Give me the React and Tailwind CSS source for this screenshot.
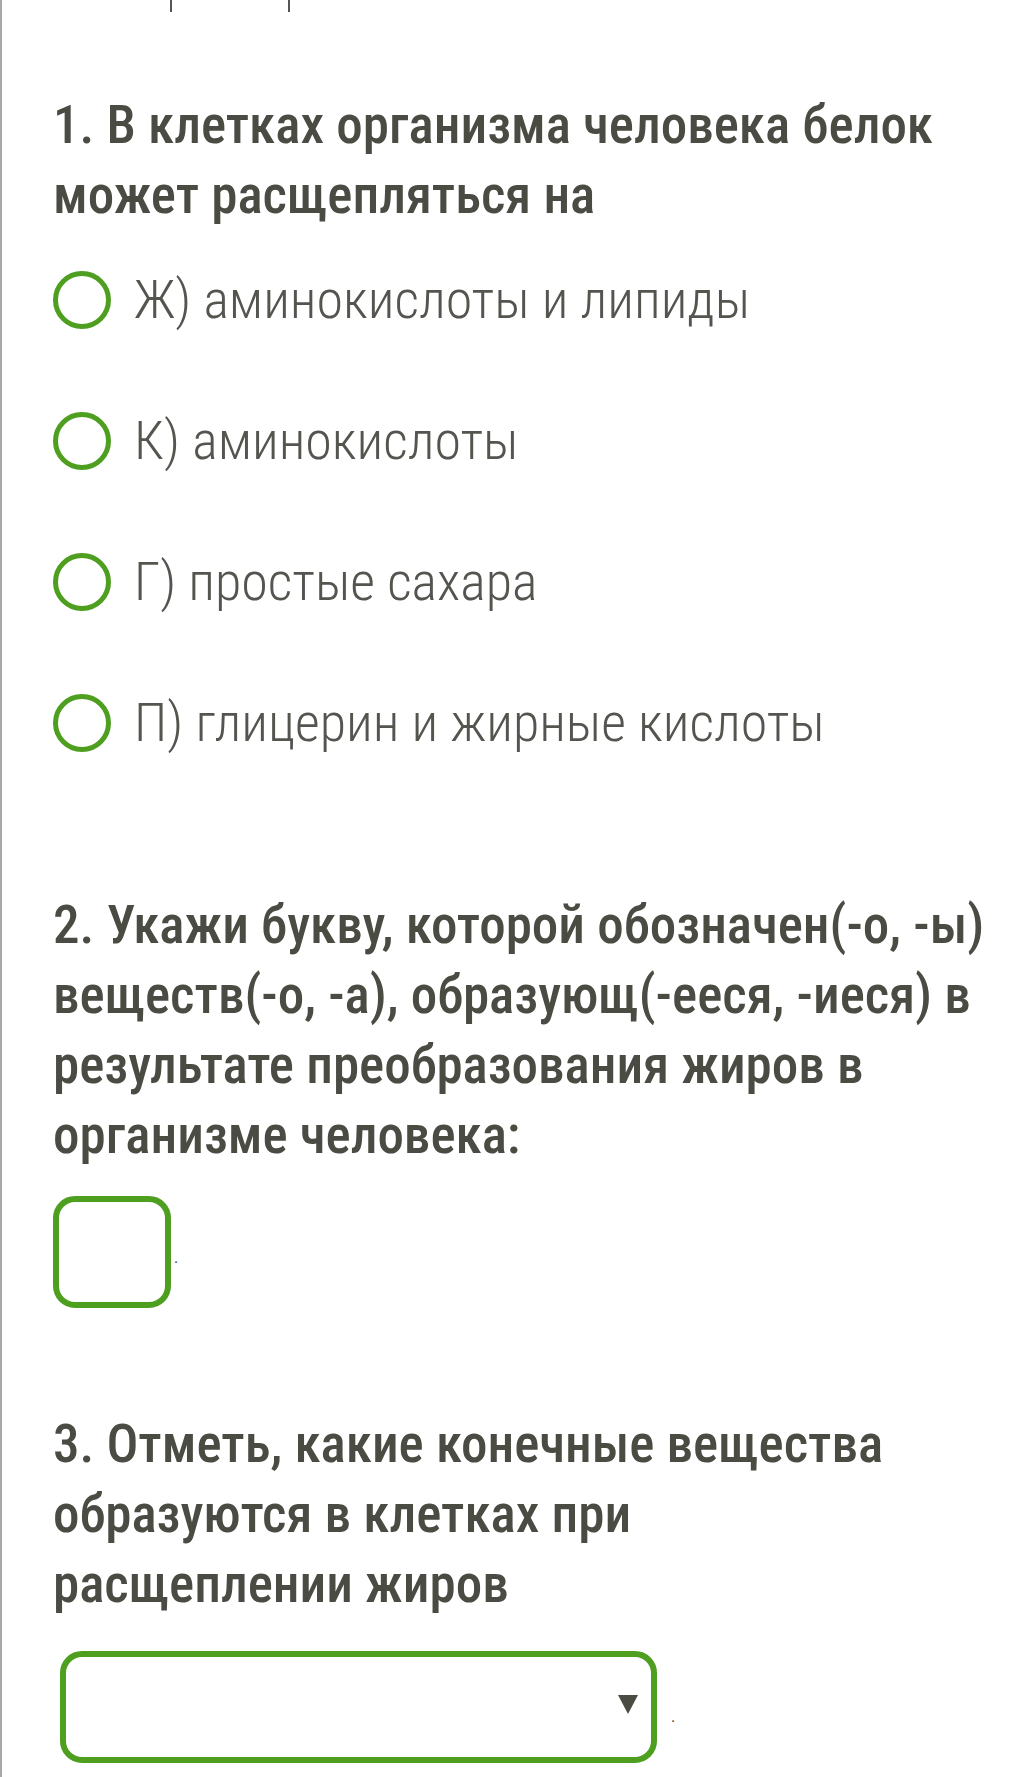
import React from "react";

const font = { fontFamily: "'Roboto Condensed', Roboto, 'Noto Sans', 'Liberation Sans', sans-serif" };

function Option({ label }) {
  return (
    <div className="flex items-center h-[60px]">
      <div className="w-[58px] h-[58px] rounded-full border-[5px] border-[#4e9f20] shrink-0" />
      <span className="ml-[23px] text-[54px] leading-[60px] font-light text-[#555550] whitespace-nowrap">
        {label}
      </span>
    </div>
  );
}

export default function App() {
  return (
    <div style={font} className="w-[1020px] min-h-[1777px] bg-white border-l-2 border-[#a8a8a8] overflow-hidden">
      <div className="flex h-[9px] relative">
        <div className="absolute left-[168px] top-0 w-[2px] h-[12px] bg-[#555]" />
        <div className="absolute left-[286px] top-0 w-[2px] h-[12px] bg-[#555]" />
      </div>
      <div className="pl-[51px] pr-[20px]">
        <div className="mt-[81px] text-[53px] leading-[70px] font-medium text-[#4a4b43]">
          <div className="whitespace-nowrap">1. В клетках организма человека белок</div>
          <div className="whitespace-nowrap">может расщепляться на</div>
        </div>
        <div className="mt-[40px] flex flex-col gap-[81px]">
          <Option label="Ж) аминокислоты и липиды" />
          <Option label="К) аминокислоты" />
          <Option label="Г) простые сахара" />
          <Option label="П) глицерин и жирные кислоты" />
        </div>
        <div className="mt-[137px] text-[53px] leading-[70px] font-medium text-[#4a4b43]">
          <div className="whitespace-nowrap">2. Укажи букву, которой обозначен(-о, -ы)</div>
          <div className="whitespace-nowrap">веществ(-о, -а), образующ(-еeся, -иеся) в</div>
          <div className="whitespace-nowrap">результате преобразования жиров в</div>
          <div className="whitespace-nowrap">организме человека:</div>
        </div>
        <div className="mt-[26px] flex items-end">
          <div className="w-[118px] h-[112px] rounded-[22px] border-[6px] border-[#4e9f20] shrink-0" />
          <span className="ml-[3px] mb-[42px] text-[16px] leading-none text-[#444]">.</span>
        </div>
        <div className="mt-[101px] text-[53px] leading-[70px] font-medium text-[#4a4b43]">
          <div className="whitespace-nowrap">3. Отметь, какие конечные вещества</div>
          <div className="whitespace-nowrap">образуются в клетках при</div>
          <div className="whitespace-nowrap">расщеплении жиров</div>
        </div>
        <div className="mt-[32px] ml-[7px] flex items-end">
          <div className="w-[597px] h-[112px] rounded-[22px] border-[6px] border-[#4e9f20] shrink-0 flex items-center justify-end pr-[13px]">
            <svg width="20" height="19" viewBox="0 0 20 19" className="-mt-[6px]">
              <polygon points="0,0 20,0 10,19" fill="#4a4b43" />
            </svg>
          </div>
          <span className="ml-[14px] mb-[38px] text-[16px] leading-none text-[#444]">.</span>
        </div>
      </div>
    </div>
  );
}
